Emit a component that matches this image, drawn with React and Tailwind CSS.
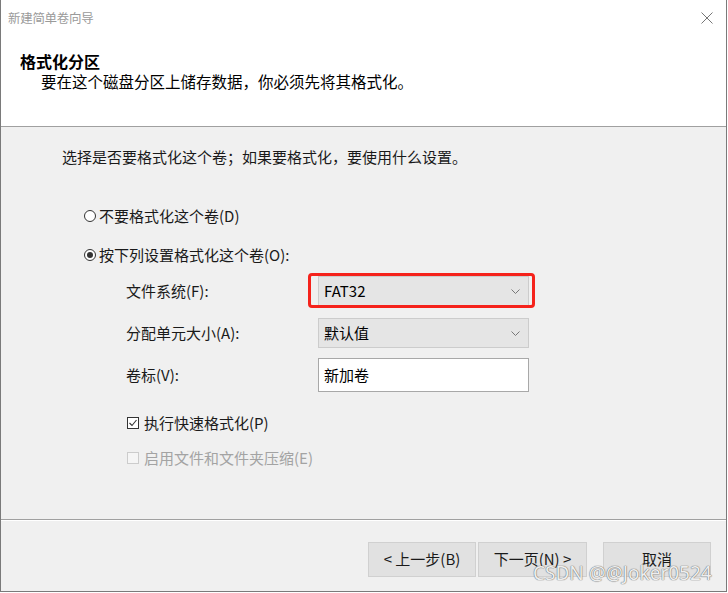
import React from 'react';

const font = "font-['Noto_Sans_CJK_SC',sans-serif]";

const Chevron = () => (
  <svg width="9" height="5" viewBox="0 0 9 5" className="shrink-0">
    <path d="M0.5 0.5 L4.5 4.5 L8.5 0.5" fill="none" stroke="#777" strokeWidth="1" />
  </svg>
);

const Radio = ({ checked, label }) => (
  <div className="flex items-center h-[20px]">
    <div className="w-[12px] h-[12px] rounded-full border border-[#333] bg-white flex items-center justify-center">
      {checked && <div className="w-[6px] h-[6px] rounded-full bg-[#333]"></div>}
    </div>
    <span className="ml-[3px] text-[15px] leading-[20px] text-[#1a1a1a]">{label}</span>
  </div>
);

const Check = ({ checked, disabled, label }) => (
  <div className="flex items-center h-[20px]">
    <div className={`w-[12px] h-[12px] border flex items-center justify-center ${disabled ? 'border-[#cccccc] bg-[#f5f5f5]' : 'border-[#333] bg-white'}`}>
      {checked && (
        <svg width="10" height="10" viewBox="0 0 10 10">
          <path d="M1.5 5 L4 7.5 L8.5 2" fill="none" stroke="#333" strokeWidth="1.1" />
        </svg>
      )}
    </div>
    <span className={`ml-[5px] text-[15px] leading-[20px] ${disabled ? 'text-[#a3a3a3]' : 'text-[#1a1a1a]'}`}>{label}</span>
  </div>
);

const Button = ({ children, className = '' }) => (
  <div className={`h-[35px] bg-[#e1e1e1] border border-[#d0d0d0] flex items-center justify-center text-[15px] text-[#1a1a1a] ${className}`}>
    {children}
  </div>
);

export default function App() {
  return (
    <div className={`w-[728px] h-[593px] bg-white flex ${font}`}>
      <div className="relative w-[727px] h-[592px] border-l border-r border-b border-[#7a7a7a] flex flex-col bg-[#f0f0f0]">
        {/* Header */}
        <div className="bg-white h-[127px] border-b border-[#a0a0a0] flex flex-col">
          <div className="h-[36px] flex items-center justify-between pl-[7px] pr-[13px]">
            <span className="text-[12.5px] text-[#9a9a9a] tracking-[-0.3px]">新建简单卷向导</span>
            <svg width="12" height="12" viewBox="0 0 12 12">
              <path d="M0.5 0.5 L11.5 11.5 M11.5 0.5 L0.5 11.5" stroke="#666" strokeWidth="0.9" />
            </svg>
          </div>
          <div className="pl-[19px] mt-[15px] text-[16px] leading-[20px] font-bold text-black">格式化分区</div>
          <div className="pl-[40px] text-[15.5px] leading-[20px] text-black">要在这个磁盘分区上储存数据，你必须先将其格式化。</div>
        </div>

        {/* Body */}
        <div className="flex-1 flex flex-col pt-[20px]">
          <div className="pl-[61px] text-[15px] leading-[20px] text-[#1a1a1a]">选择是否要格式化这个卷；如果要格式化，要使用什么设置。</div>

          <div className="pl-[83px] mt-[39px]">
            <Radio label="不要格式化这个卷(D)" />
          </div>
          <div className="pl-[83px] mt-[19px]">
            <Radio checked label="按下列设置格式化这个卷(O):" />
          </div>

          <div className="pl-[125px] mt-[11px] flex flex-col">
            <div className="flex items-center h-[30px]">
              <span className="w-[192px] text-[15px] text-[#1a1a1a]">文件系统(F):</span>
              <div className="relative w-[211px] h-[30px] bg-[#e5e5e5] border border-[#cccccc] flex items-center justify-between pl-[5px] pr-[8px]">
                <span className="text-[15px] text-black">FAT32</span>
                <Chevron />
                <div className="absolute -left-[11px] -right-[7px] -top-[4px] -bottom-[3px] border-[3px] border-[#f5221b] rounded-[4px]"></div>
              </div>
            </div>
            <div className="flex items-center h-[30px] mt-[12px]">
              <span className="w-[192px] text-[15px] text-[#1a1a1a]">分配单元大小(A):</span>
              <div className="w-[211px] h-[30px] bg-[#e5e5e5] border border-[#cccccc] flex items-center justify-between pl-[5px] pr-[8px]">
                <span className="text-[15px] text-black">默认值</span>
                <Chevron />
              </div>
            </div>
            <div className="flex items-center h-[34px] mt-[10px]">
              <span className="w-[192px] text-[15px] text-[#1a1a1a]">卷标(V):</span>
              <div className="w-[211px] h-[34px] bg-white border border-[#a8a8a8] flex items-center pl-[5px]">
                <span className="text-[15px] text-black">新加卷</span>
              </div>
            </div>
          </div>

          <div className="pl-[126px] mt-[21px]">
            <Check checked label="执行快速格式化(P)" />
          </div>
          <div className="pl-[126px] mt-[15px]">
            <Check disabled label="启用文件和文件夹压缩(E)" />
          </div>
        </div>

        {/* Footer */}
        <div className="h-[72px] border-t border-[#a0a0a0] flex flex-col">
          <div className="h-px bg-white"></div>
          <div className="flex justify-end pr-[15px] mt-[21px]">
            <Button className="w-[108px]">&lt; 上一步(B)</Button>
            <Button className="w-[109px] ml-[2px]">下一页(N) &gt;</Button>
            <Button className="w-[108px] ml-[16px]">取消</Button>
          </div>
        </div>

        <div className="absolute left-[532px] top-[561px] text-[19px] leading-[24px] text-[#eeeeee] font-['Noto_Sans',sans-serif] [text-shadow:0_0_1px_#666,0_0_1px_#666]">
          CSDN @@Joker0524
        </div>
      </div>
    </div>
  );
}
